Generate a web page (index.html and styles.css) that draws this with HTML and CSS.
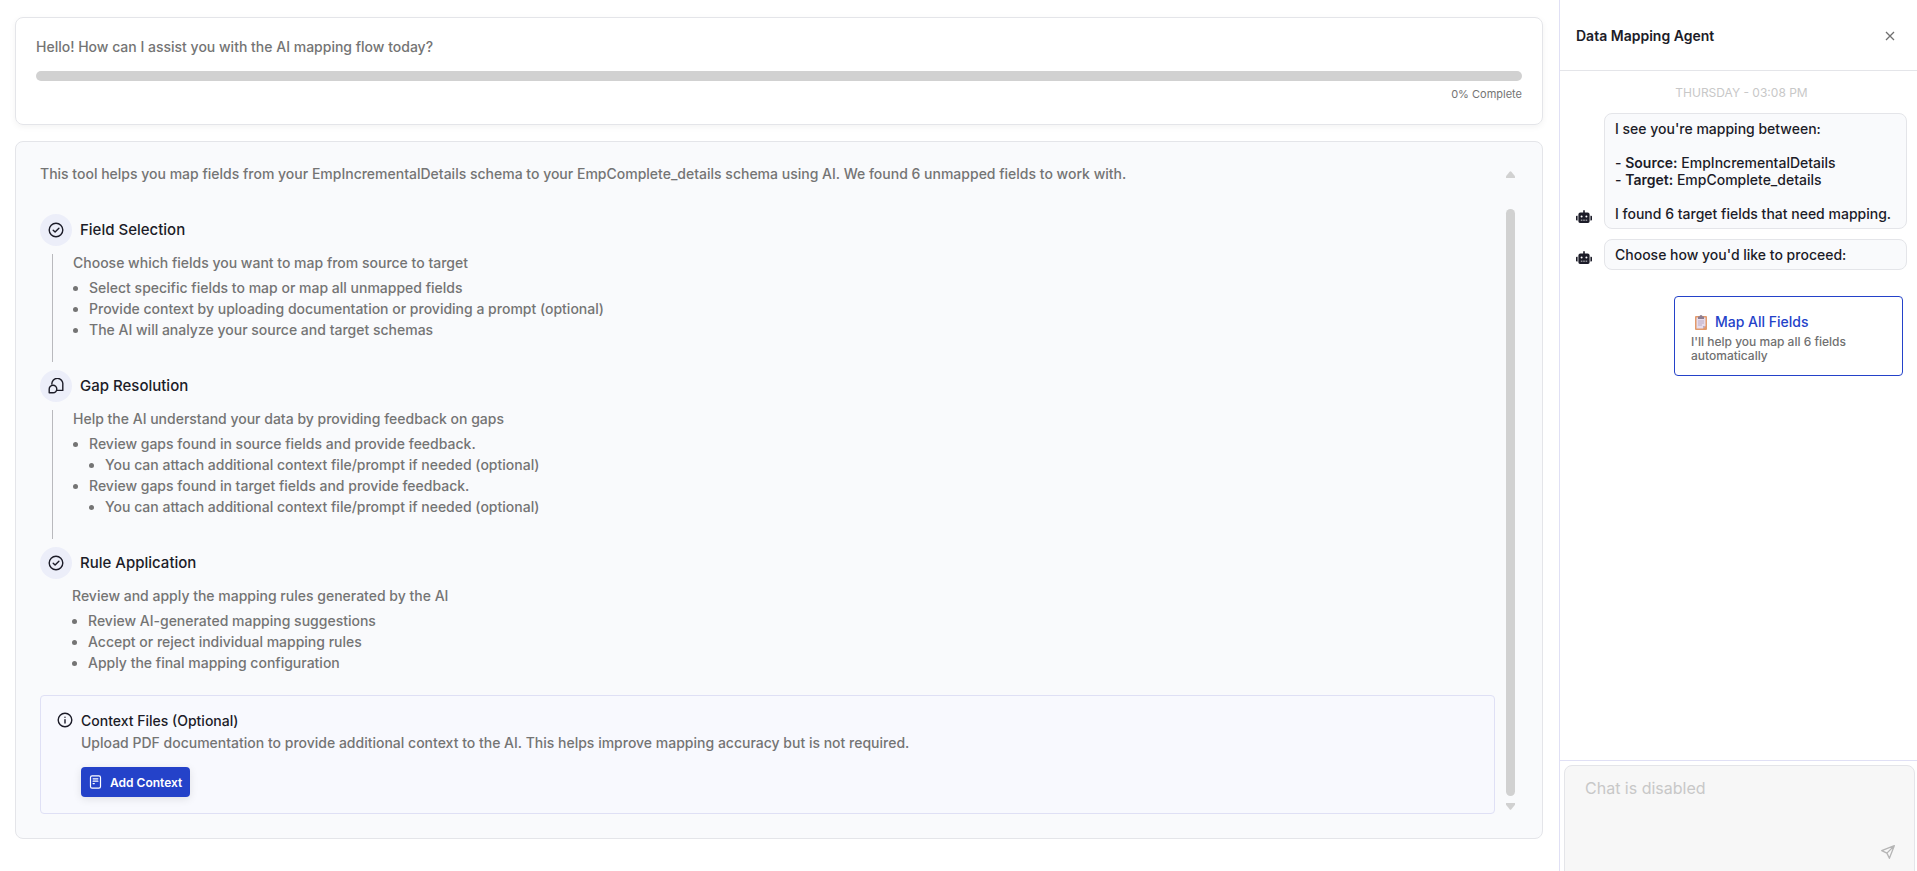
FILE: index.html
```
<!DOCTYPE html>
<html lang="en">
<head>
	<meta charset="utf-8">
	<title>Data Mapping</title>
	<meta name="viewport" content="width=device-width,initial-scale=1.0">
	<link rel="stylesheet" href="styles.css">
</head>
<body>
<svg class="sprite" aria-hidden="true">
	<symbol id="icon_check" viewBox="0 0 16 16">
		<g fill="none" stroke="currentColor" stroke-width="1.4" stroke-linecap="round" stroke-linejoin="round">
			<circle cx="8" cy="8" r="6.8"/>
			<path d="M5.2 8.2l1.9 1.9 3.8-3.8"/>
		</g>
	</symbol>
	<symbol id="icon_chat" viewBox="0 0 16 16">
		<g fill="none" stroke="currentColor" stroke-width="1.4" stroke-linejoin="round">
			<path d="M3.900 6.600A5.500 5.500 0 1 1 14.800 6.600V12.400H8.800"/>
			<path d="M1.200 14.800V11.200A3.800 3.800 0 1 1 5 14.800z"/>
		</g>
	</symbol>
	<symbol id="icon_robot" viewBox="0 0 640 512">
		<path fill="currentColor" d="M32 224h32v192H32a32 32 0 0 1-32-32V256a32 32 0 0 1 32-32zm512-48v272a64 64 0 0 1-64 64H160a64 64 0 0 1-64-64V176a80 80 0 0 1 80-80h112V32a32 32 0 0 1 64 0v64h112a80 80 0 0 1 80 80zM264 256a40 40 0 1 0-80 0 40 40 0 0 0 80 0zm-8 128h-64v32h64v-32zm96 0h-64v32h64v-32zm104-128a40 40 0 1 0-80 0 40 40 0 0 0 80 0zm-8 128h-64v32h64v-32zm192-128v128a32 32 0 0 1-32 32h-32V224h32a32 32 0 0 1 32 32z"/>
	</symbol>
</svg>
<div class="wrapper">
	<main class="content">
		<section class="card progress_card">
			<p id="progress_label">Hello! How can I assist you with the AI mapping flow today?</p>
			<progress class="progress" value="0" max="100" aria-labelledby="progress_label"></progress>
			<p class="progress_text">0% Complete</p>
		</section>

		<section class="card guide">
			<div class="guide_body">
				<p class="intro">This tool helps you map fields from your EmpIncrementalDetails schema to your EmpComplete_details schema using AI. We found 6 unmapped fields to work with.</p>

				<div class="step">
					<div class="step_head">
						<span class="step_icon"><svg><use href="#icon_check"/></svg></span>
						<h4>Field Selection</h4>
					</div>
					<div class="step_body">
						<p>Choose which fields you want to map from source to target</p>
						<ul>
							<li>Select specific fields to map or map all unmapped fields</li>
							<li>Provide context by uploading documentation or providing a prompt (optional)</li>
							<li>The AI will analyze your source and target schemas</li>
						</ul>
					</div>
				</div>

				<div class="step">
					<div class="step_head">
						<span class="step_icon"><svg><use href="#icon_chat"/></svg></span>
						<h4>Gap Resolution</h4>
					</div>
					<div class="step_body">
						<p>Help the AI understand your data by providing feedback on gaps</p>
						<ul>
							<li>Review gaps found in source fields and provide feedback.
								<ul><li>You can attach additional context file/prompt if needed (optional)</li></ul>
							</li>
							<li>Review gaps found in target fields and provide feedback.
								<ul><li>You can attach additional context file/prompt if needed (optional)</li></ul>
							</li>
						</ul>
					</div>
				</div>

				<div class="step last">
					<div class="step_head">
						<span class="step_icon"><svg><use href="#icon_check"/></svg></span>
						<h4>Rule Application</h4>
					</div>
					<div class="step_body">
						<p>Review and apply the mapping rules generated by the AI</p>
						<ul>
							<li>Review AI-generated mapping suggestions</li>
							<li>Accept or reject individual mapping rules</li>
							<li>Apply the final mapping configuration</li>
						</ul>
					</div>
				</div>

				<div class="context">
					<svg class="info_icon" viewBox="0 0 16 16" fill="none" stroke="currentColor" stroke-width="1.4" stroke-linecap="round">
						<circle cx="8" cy="8" r="6.8"/>
						<path d="M8 7.6v3.4M8 5.1v.1"/>
					</svg>
					<div class="context_text">
						<h5>Context Files (Optional)</h5>
						<p>Upload PDF documentation to provide additional context to the AI. This helps improve mapping accuracy but is not required.</p>
						<button type="button" class="add_btn">
							<svg viewBox="0 0 12 14" fill="none" stroke="currentColor" stroke-width="1.2" stroke-linecap="round">
								<rect x="1" y=".8" width="10" height="12.4" rx="1.6"/>
								<path d="M3.6 3.8h4.8M3.6 6.2h4.8M3.6 8.6h1.2"/>
							</svg>
							Add Context
						</button>
					</div>
				</div>
			</div>
			<div class="scroll" aria-hidden="true">
				<svg class="arrow" viewBox="0 0 9 7"><path d="M3.6.8a1.2 1.2 0 0 1 1.8 0L9 5.2V7H0V5.2z"/></svg>
				<div class="thumb"></div>
				<svg class="arrow" viewBox="0 0 9 7"><path d="M3.6 6.2a1.2 1.2 0 0 0 1.8 0L9 1.8V0H0v1.8z"/></svg>
			</div>
		</section>
	</main>

	<aside class="agent">
		<header class="agent_header">
			<h3>Data Mapping Agent</h3>
			<button type="button" class="close_btn" aria-label="Close">
				<svg viewBox="0 0 10 10" fill="none" stroke="currentColor" stroke-width="1.3"><path d="M1 1l8 8M9 1l-8 8"/></svg>
			</button>
		</header>
		<div class="messages">
			<p class="date">THURSDAY - 03:08 PM</p>
			<div class="message">
				<svg class="robot"><use href="#icon_robot"/></svg>
				<p class="bubble">I see you're mapping between:<br><br>- <b>Source:</b> EmpIncrementalDetails<br>- <b>Target:</b> EmpComplete_details<br><br>I found 6 target fields that need mapping.</p>
			</div>
			<div class="message">
				<svg class="robot"><use href="#icon_robot"/></svg>
				<p class="bubble">Choose how you'd like to proceed:</p>
			</div>
			<button type="button" class="option">
				<span class="option_title">
					<svg viewBox="0 0 12 15">
						<rect x="0" y="1" width="12" height="14" rx="1" fill="#e39a6b"/>
						<path d="M1.5 2.5h9v8.5l-2.5 2.5H1.5z" fill="#e6dcec"/>
						<path d="M8 13.5V11h2.5z" fill="#b9a8c4"/>
						<path d="M3 6h6M3 8h6M3 10h4" stroke="#b3a0bd" stroke-width=".8"/>
						<path d="M3 1.5h1.5a1.5 1.5 0 0 1 3 0H9V4H3z" fill="#8d7d90"/>
					</svg>
					Map All Fields
				</span>
				<span class="option_text">I'll help you map all 6 fields automatically</span>
			</button>
		</div>
		<div class="composer">
			<div class="composer_box">
				<textarea placeholder="Chat is disabled" aria-label="Chat message" disabled></textarea>
				<button type="button" class="send_btn" aria-label="Send" disabled>
					<svg viewBox="0 0 14 14" fill="none" stroke="currentColor" stroke-width="1.3" stroke-linejoin="round"><path d="M13.3.7L.7 5.6l5.2 2.5 2.5 5.2zM13.3.7L5.9 8.1"/></svg>
				</button>
			</div>
		</div>
	</aside>
</div>
</body>
</html>
```
FILE: styles.css
```
*{margin: 0;padding: 0;box-sizing: border-box;font-family: Inter, sans-serif;}
body{background: #fff;color: #1c1c28;font-size: 14px;line-height: 18px;overflow: hidden;}
button{cursor: pointer;}
.sprite{display: none;}
.wrapper{display: grid;grid-template-columns: 1fr 358px;height: 100vh;}

.content{display: flex;flex-direction: column;gap: 16px;padding: 17px 16px 17px 15px;color: #747474;font-weight: 450;}
.card{border: 1px solid #e4e5e9;border-radius: 8px;}
.progress_card{padding: 20px;display: flex;flex-direction: column;box-shadow: 0 2px 6px rgba(0,0,0,0.05);}
.progress{appearance: none;width: 100%;height: 10px;margin: 15px 0 4px;border: none;border-radius: 5px;overflow: hidden;background: #d1d1d1;}
.progress::-webkit-progress-bar{background: #d1d1d1;}
.progress::-webkit-progress-value{background: #2442c9;}
.progress_text{font-size: 11px;font-weight: 400;text-align: right;margin-bottom: 1px;}

.guide{background: #f9fafc;display: flex;gap: 11px;padding: 24px 27px 24px 24px;}
.guide_body{flex: 1;min-width: 0;}
.intro{line-height: 16px;margin-bottom: 32px;}
.step{margin-bottom: 8px;}
.step_head{display: flex;align-items: center;gap: 8px;margin-bottom: 8px;}
.step_head h4{font-size: 15px;font-weight: 500;color: #1c1c28;}
.step_icon{width: 32px;height: 32px;border-radius: 50%;background: #eceef9;color: #1c1c28;display: flex;justify-content: center;align-items: center;}
.step_icon svg{width: 16px;height: 16px;}
.step_body{margin-left: 12px;padding: 0 0 22px 20px;border-left: 1px solid #b9b9bd;}
.step_body ul{padding-left: 16px;line-height: 21px;list-style: disc;}
.step_body p{margin-bottom: 5px;}
.last{margin-bottom: 0;}
.last .step_body{border-left: none;}

.context{display: flex;gap: 8px;padding: 16px;border: 1px solid #dfe0f5;border-radius: 4px;background: #f8f9fe;}
.info_icon{width: 16px;height: 16px;color: #1c1c28;}
.context_text h5{font-size: 14px;font-weight: 500;color: #1c1c28;margin-bottom: 4px;}
.add_btn{display: flex;align-items: center;gap: 8px;height: 30px;margin-top: 15px;padding: 0 8px;border: none;border-radius: 4px;background: #2442c9;color: #fff;font-size: 12px;font-weight: 600;box-shadow: 0 2px 8px rgba(0,0,0,0.1);}
.add_btn svg{width: 13px;height: 14px;}

.scroll{width: 9px;display: flex;flex-direction: column;padding: 5px 0 4px;}
.arrow{width: 9px;height: 7px;fill: #d1d1d1;}
.thumb{flex: 1;margin: 31px 0 7px;border-radius: 5px;background: #d1d1d1;}

.agent{display: flex;flex-direction: column;min-height: 0;border-left: 1px solid #e0e0f5;}
.agent_header{display: flex;justify-content: space-between;align-items: center;height: 71px;padding: 2px 17px 0 16px;border-bottom: 1px solid #e4e5e9;}
.agent_header h3{font-size: 14px;font-weight: 600;}
.close_btn{width: 20px;height: 20px;border: none;background: none;color: #707070;}
.close_btn svg{width: 10px;height: 10px;}
.messages{flex: 1;display: flex;flex-direction: column;gap: 10px;padding: 13px 10px 12px 16px;}
.date{font-size: 12px;text-align: center;color: #c8c8c8;margin-bottom: 1px;}
.message{display: flex;align-items: flex-end;gap: 12px;}
.robot{width: 16px;height: 13px;margin-bottom: 6px;}
.bubble{flex: 1;padding: 6px 10px;border: 1px solid #e4e5e9;border-radius: 8px;background: #f9fafc;font-weight: 450;line-height: 17px;}
.bubble b{font-weight: 600;}
.option{align-self: flex-end;width: 229px;margin: 16px 4px 0 0;padding: 16px 16px 12px;border: 1px solid #2442c9;border-radius: 4px;background: #fff;text-align: left;}
.option_title{display: flex;align-items: center;gap: 8px;margin-bottom: 4px;padding-left: 4px;font-size: 14px;font-weight: 450;line-height: 18px;color: #2442c9;}
.option_title svg{width: 12px;height: 15px;}
.option_text{display: block;font-size: 12px;font-weight: 450;line-height: 14px;color: #707070;}
.composer{height: 111px;border-top: 1px solid #e0e0f5;padding: 4px 2px 0 4px;}
.composer_box{display: flex;align-items: flex-end;height: 114px;padding-right: 19px;border: 1px solid #e4e5e9;border-radius: 8px;background: #f7f7f7;}
.composer textarea{flex: 1;height: 100%;padding: 11px 20px;border: none;outline: none;resize: none;background: none;font-size: 16px;line-height: 22px;}
.composer textarea::placeholder{color: #c8c8c8;}
.send_btn{width: 14px;height: 14px;margin-bottom: 19px;border: none;background: none;color: #b5b5b5;}
.send_btn svg{display: block;width: 14px;height: 14px;}
```
